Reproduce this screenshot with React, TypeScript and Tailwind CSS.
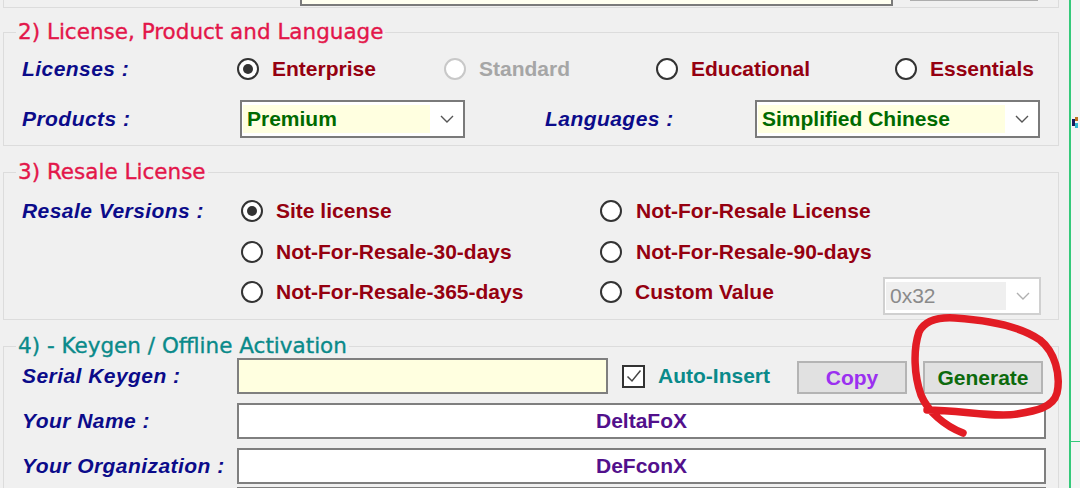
const label = "font-bold italic text-[21px] leading-[24px] tracking-[0.45px] text-[#0b0b8a]";
const opt = "font-bold text-[21px] leading-[24px] text-[#950010]";
const title = "font-['DejaVu_Sans',Verdana,sans-serif] text-[21.5px] leading-[24px] [-webkit-text-stroke:0.35px_currentColor]";

function Radio({ checked, disabled }: { checked?: boolean; disabled?: boolean }) {
  return (
    <span
      className={`flex h-[22px] w-[22px] shrink-0 items-center justify-center rounded-full border-2 bg-white ${
        disabled ? "border-[#c8c8c8]" : "border-[#333333]"
      }`}
    >
      {checked && <span className="h-[10px] w-[10px] rounded-full bg-[#333333]" />}
    </span>
  );
}

function Option({
  text,
  checked,
  disabled,
  className = "",
}: {
  text: string;
  checked?: boolean;
  disabled?: boolean;
  className?: string;
}) {
  return (
    <div className={`flex items-center gap-[13px] ${className}`}>
      <Radio checked={checked} disabled={disabled} />
      <span className={disabled ? "text-[21px] font-bold leading-[24px] text-[#a6a6a6]" : opt}>{text}</span>
    </div>
  );
}

function Chevron({ color = "#555555" }: { color?: string }) {
  return (
    <svg width="14" height="8" viewBox="0 0 14 8" fill="none">
      <path d="M1 1l6 6 6-6" stroke={color} strokeWidth="1.4" />
    </svg>
  );
}

function Combo({ value, className = "", disabled }: { value: string; className?: string; disabled?: boolean }) {
  return (
    <div
      className={`flex h-[38px] items-center border-2 bg-white ${
        disabled ? "border-[#d0d0d0]" : "border-[#7a7a7a]"
      } ${className}`}
    >
      <div
        className={`ml-[1px] flex h-[28px] flex-1 items-center pl-[4px] ${
          disabled ? "bg-[#efefef]" : "bg-[#ffffe0]"
        }`}
      >
        <span
          className={
            disabled
              ? "text-[21px] leading-[24px] text-[#8a8a8a]"
              : "text-[21px] font-bold leading-[24px] text-[#006a00]"
          }
        >
          {value}
        </span>
      </div>
      <div className="flex w-[33px] shrink-0 justify-center">
        <Chevron color={disabled ? "#b0b0b0" : "#555555"} />
      </div>
    </div>
  );
}

function Group({
  heading,
  color,
  className = "",
  children,
}: {
  heading: string;
  color: string;
  className?: string;
  children: React.ReactNode;
}) {
  return (
    <fieldset className={`min-w-0 border border-[#dcdcdc] ${className}`}>
      <legend className={`ml-[12px] px-[2px] ${title} ${color}`}>{heading}</legend>
      <div className="pl-[18px]">{children}</div>
    </fieldset>
  );
}

function TextBox({ value = "", yellow, className = "" }: { value?: string; yellow?: boolean; className?: string }) {
  return (
    <div
      className={`flex h-[36px] items-center justify-center border-2 border-[#7f7f7f] ${
        yellow ? "bg-[#ffffe0]" : "bg-white"
      } ${className}`}
    >
      <span className="text-[21px] font-bold leading-[24px] text-[#52108c]">{value}</span>
    </div>
  );
}

export default function App() {
  return (
    <div className="relative flex h-[488px] w-[1080px] overflow-hidden bg-[#f0f0f0] font-['Liberation_Sans',Arial,sans-serif]">
      <div className="flex w-[1069px] shrink-0 flex-col pl-[3px] pr-[10px]">
        {/* bottom of the previous group */}
        <div className="flex h-[8px] shrink-0 items-start border-x border-b border-[#dcdcdc]">
          <div className="ml-[296px] h-[6px] w-[593px] border-2 border-t-0 border-[#7a7a7a] bg-[#fffff0]" />
          <div className="ml-[17px] h-[1px] w-[128px] bg-[#adadad]" />
        </div>

        <Group heading="2) License, Product and Language" color="text-[#e3164a]" className="mt-[12px] pb-[7px]">
          <div className="mt-[7px] flex h-[36px] items-center">
            <span className={`w-[215px] ${label}`}>Licenses :</span>
            <Option text="Enterprise" checked className="w-[207px]" />
            <Option text="Standard" disabled className="w-[212px]" />
            <Option text="Educational" className="w-[239px]" />
            <Option text="Essentials" />
          </div>
          <div className="mt-[13px] flex h-[38px] items-center">
            <span className={`w-[218px] ${label}`}>Products :</span>
            <Combo value="Premium" className="w-[225px]" />
            <span className={`ml-[80px] w-[210px] ${label}`}>Languages :</span>
            <Combo value="Simplified Chinese" className="w-[285px]" />
          </div>
        </Group>

        <Group heading="3) Resale License" color="text-[#e3164a]" className="mt-[14px] pb-[7px]">
          <div className="mt-[7px] flex h-[40px] items-center">
            <span className={`w-[219px] ${label}`}>Resale Versions :</span>
            <Option text="Site license" checked className="w-[359px]" />
            <Option text="Not-For-Resale License" className="gap-[14px]" />
          </div>
          <div className="flex h-[41px] items-center">
            <span className="w-[219px]" />
            <Option text="Not-For-Resale-30-days" className="w-[359px]" />
            <Option text="Not-For-Resale-90-days" className="gap-[14px]" />
          </div>
          <div className="flex h-[40px] items-center">
            <span className="w-[219px]" />
            <Option text="Not-For-Resale-365-days" className="w-[359px]" />
            <Option text="Custom Value" className="w-[283px] gap-[13px]" />
            <Combo value="0x32" disabled className="mb-[-8px] w-[158px]" />
          </div>
        </Group>

        <Group heading="4) - Keygen / Offline Activation" color="text-[#0a8a8a]" className="mt-[14px]">
          <div className="flex flex-col gap-[9px]">
            <div className="flex h-[36px] items-center">
              <span className={`w-[215px] ${label}`}>Serial Keygen :</span>
              <TextBox yellow className="w-[371px]" />
              <span className="ml-[14px] flex h-[23px] w-[23px] items-center justify-center border-2 border-[#333333] bg-white">
                <svg width="16" height="14" viewBox="0 0 16 14" fill="none">
                  <path d="M1.5 7.5l4.5 4.5L14.5 1.5" stroke="#444444" strokeWidth="1.5" />
                </svg>
              </span>
              <span className="ml-[13px] text-[21px] font-bold leading-[24px] text-[#0a8a8a]">Auto-Insert</span>
              <button className="ml-[27px] mt-[3px] flex h-[33px] w-[110px] items-center justify-center border-2 border-[#b4b4b4] bg-[#e1e1e1] text-[21px] font-bold leading-[24px] text-[#9b30f0]">
                Copy
              </button>
              <button className="ml-[16px] mt-[3px] flex h-[33px] w-[120px] items-center justify-center border-2 border-[#b4b4b4] bg-[#e1e1e1] text-[21px] font-bold leading-[24px] text-[#0d6a0d]">
                Generate
              </button>
            </div>
            <div className="flex h-[36px] items-center">
              <span className={`w-[215px] ${label}`}>Your Name :</span>
              <TextBox value="DeltaFoX" className="w-[809px]" />
            </div>
            <div className="flex h-[36px] items-center">
              <span className={`w-[215px] ${label}`}>Your Organization :</span>
              <TextBox value="DeFconX" className="w-[809px]" />
            </div>
            <div className="mt-[-6px] flex h-[36px] items-center">
              <span className="w-[215px]" />
              <div className="h-[36px] w-[809px] border-2 border-[#7f7f7f] bg-white" />
            </div>
          </div>
        </Group>
      </div>

      <div className="w-[2px] shrink-0 bg-[#35c97a]" />
      <div className="flex flex-1 flex-col bg-[#f4f4f4]">
        <div className="mt-[117px] ml-[1px] h-[11px] w-[6px]">
          <svg width="6" height="11" viewBox="0 0 6 11">
            <rect x="0" y="2" width="3" height="7" fill="#1a1a5a" />
            <rect x="3" y="0" width="3" height="4" fill="#c07020" />
            <rect x="3" y="6" width="3" height="5" fill="#30b8d0" />
          </svg>
        </div>
        <div className="mt-[313px] h-[1px] w-full bg-[#35c97a]" />
      </div>

      <svg className="pointer-events-none absolute inset-0" width="1080" height="488" viewBox="0 0 1080 488" fill="none">
        <path
          d="M963 433C945 426 928 412 921 395C914 375 913 350 919 332C925 320 938 317 955 318C985 320 1020 326 1040 340C1055 352 1061 375 1057 393C1053 408 1035 411 1017 414C995 418 960 410 927 410"
          stroke="#e21c24"
          strokeWidth="7.5"
          strokeLinecap="round"
          strokeLinejoin="round"
        />
      </svg>
    </div>
  );
}
